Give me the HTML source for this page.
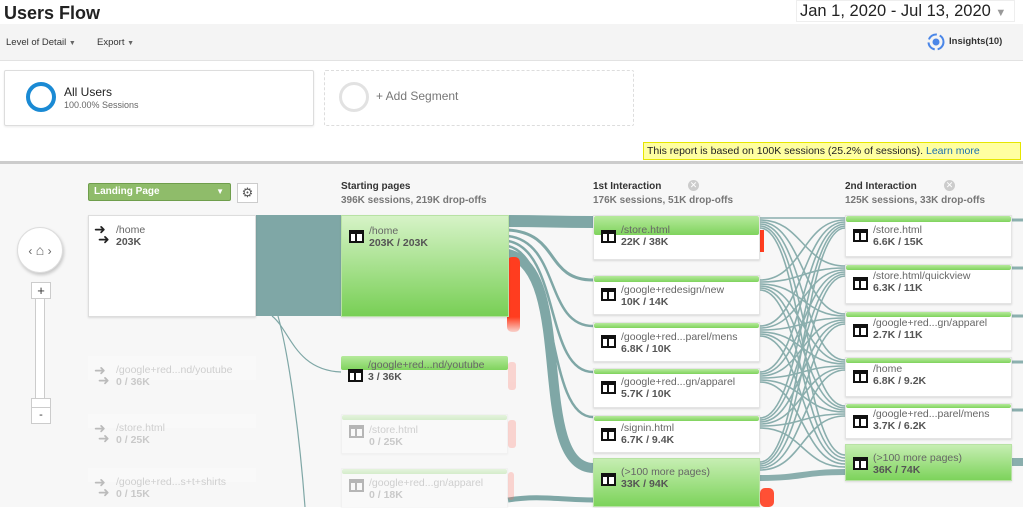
<!DOCTYPE html>
<html><head><meta charset="utf-8"><style>
*{margin:0;padding:0;box-sizing:border-box}
body{width:1023px;height:507px;overflow:hidden;background:#fff;font-family:"Liberation Sans",Arial,sans-serif;position:relative}
.a{position:absolute}
.node{position:absolute;background:#fff;border:1px solid #e4e4e4;box-shadow:0 1px 2px rgba(0,0,0,.12)}
.bar{position:absolute;left:0;right:0;top:0;background:linear-gradient(#b6ea9c,#7fd35d);border-radius:2px}
.ic{position:absolute;left:7px;width:15px;height:13px;background:#111;}
.ic:before{content:"";position:absolute;left:2px;top:4px;width:4px;height:7px;background:#fff}
.ic:after{content:"";position:absolute;left:8px;top:4px;width:5px;height:7px;background:#fff}
.t{position:absolute;left:27px;font-size:10.5px;color:#666;line-height:12px;white-space:nowrap}
.t b{color:#555;font-weight:bold;display:block}
.hd{position:absolute;font-size:10px;color:#333;font-weight:bold;line-height:14px}
.hd span{color:#777;display:block}
.x{position:absolute;width:11px;height:11px;border-radius:50%;background:#ccc;color:#fff;font-size:9px;line-height:11px;text-align:center}
.fade{opacity:.28}
</style></head><body>
<div class="a" style="left:4px;top:3px;font-size:18px;font-weight:bold;color:#222">Users Flow</div>
<div class="a" style="left:796px;top:0;width:219px;height:22px;border:1px solid #eee;font-size:16.5px;color:#222;padding:0 0 0 3px;line-height:20px">Jan 1, 2020 - Jul 13, 2020 <span style="color:#999;font-size:11px">▼</span></div>
<div class="a" style="left:0;top:24px;width:1023px;height:37px;background:#f4f4f4;border-bottom:1px solid #e2e2e2"></div>
<div class="a" style="left:6px;top:37px;font-size:9.5px;color:#333">Level of Detail <span style="font-size:7px;color:#666">▼</span></div>
<div class="a" style="left:97px;top:37px;font-size:9.5px;color:#333">Export <span style="font-size:7px;color:#666">▼</span></div>
<svg class="a" style="left:926px;top:32px" width="20" height="20" viewBox="0 0 20 20"><circle cx="10" cy="10" r="7.5" fill="none" stroke="#4a86e8" stroke-width="2" stroke-dasharray="10 3"/><circle cx="10" cy="10" r="3.5" fill="#4a86e8"/></svg>
<div class="a" style="left:949px;top:36px;font-size:9.5px;color:#333;font-weight:bold">Insights(10)</div>
<div class="a" style="left:4px;top:70px;width:310px;height:56px;border:1px solid #ddd;border-radius:2px;box-shadow:0 1px 2px rgba(0,0,0,.08)"></div>
<div class="a" style="left:26px;top:82px;width:30px;height:30px;border:4px solid #1a8ad4;border-radius:50%"></div>
<div class="a" style="left:64px;top:85px;font-size:12px;color:#222">All Users</div>
<div class="a" style="left:64px;top:100px;font-size:9px;color:#666">100.00% Sessions</div>
<div class="a" style="left:324px;top:70px;width:310px;height:56px;border:1px dashed #ddd;border-radius:2px"></div>
<div class="a" style="left:339px;top:82px;width:30px;height:30px;border:3px solid #e2e2e2;border-radius:50%"></div>
<div class="a" style="left:376px;top:89px;font-size:12px;color:#777">+ Add Segment</div>
<div class="a" style="left:643px;top:142px;width:378px;height:18px;background:#ffffa0;border:1px solid #e6e600;font-size:10.5px;color:#222;line-height:16px;padding-left:3px;white-space:nowrap">This report is based on 100K sessions (25.2% of sessions). <span style="color:#1a6fb0">Learn more</span></div>
<div class="a" style="left:0;top:161px;width:1023px;height:346px;background:#f7f7f7;border-top:3px solid #ccc"></div>

<svg class="a" style="left:0;top:0" width="1023" height="507">
<g fill="none" stroke="#7fa7a6">
<rect x="255" y="215" width="87" height="101" fill="#7fa7a6" stroke="none"/>
<path d="M272,316 C290,330 295,370 341,372" stroke-width="1.2"/>
<path d="M278,316 C290,360 300,440 305,507" stroke-width="1.2"/>
<path d="M508,221 C550,221 550,222 593,222" stroke-width="12"/>
<path d="M508,230 C560,233 545,280 593,280" stroke-width="3"/>
<path d="M508,236 C560,242 545,326 593,326" stroke-width="2.5"/>
<path d="M508,241 C560,250 545,372 593,372" stroke-width="2.5"/>
<path d="M508,246 C560,258 545,417 593,417" stroke-width="2.5"/>
<path d="M508,254 C575,270 530,466 593,468" stroke-width="10"/>
<path d="M508,500 C540,495 560,500 593,500" stroke-width="5"/>
</g>
<g fill="none" stroke="#7fa7a6" stroke-width="1.6" opacity=".9">
<path d="M760,218C802,218 803,218 845,218"/><path d="M760,220C802,220 803,266 845,266"/><path d="M760,222C802,222 803,314 845,314"/><path d="M760,224C802,224 803,360 845,360"/><path d="M760,226C802,226 803,406 845,406"/><path d="M760,228C802,228 803,455 845,455"/>
<path d="M760,280C802,280 803,220 845,220"/><path d="M760,282C802,282 803,268 845,268"/><path d="M760,284C802,284 803,316 845,316"/><path d="M760,286C802,286 803,362 845,362"/><path d="M760,288C802,288 803,408 845,408"/><path d="M760,290C802,290 803,458 845,458"/>
<path d="M760,326C802,326 803,222 845,222"/><path d="M760,328C802,328 803,270 845,270"/><path d="M760,330C802,330 803,318 845,318"/><path d="M760,332C802,332 803,364 845,364"/><path d="M760,334C802,334 803,410 845,410"/><path d="M760,336C802,336 803,461 845,461"/>
<path d="M760,372C802,372 803,224 845,224"/><path d="M760,374C802,374 803,272 845,272"/><path d="M760,376C802,376 803,320 845,320"/><path d="M760,378C802,378 803,366 845,366"/><path d="M760,380C802,380 803,412 845,412"/><path d="M760,382C802,382 803,464 845,464"/>
<path d="M760,418C802,418 803,226 845,226"/><path d="M760,420C802,420 803,274 845,274"/><path d="M760,422C802,422 803,322 845,322"/><path d="M760,424C802,424 803,368 845,368"/><path d="M760,426C802,426 803,414 845,414"/><path d="M760,428C802,428 803,467 845,467"/>
<path d="M760,462C802,462 803,228 845,228"/><path d="M760,464C802,464 803,276 845,276"/><path d="M760,466C802,466 803,324 845,324"/><path d="M760,468C802,468 803,370 845,370"/><path d="M760,470C802,470 803,416 845,416"/>
<path d="M760,478C802,478 803,472 845,472" stroke-width="6"/>
<path d="M1012,220h11M1012,268h11M1012,316h11M1012,362h11M1012,410h11" stroke-width="3"/>
<path d="M1012,462h11" stroke-width="8"/>
</g>
<defs><linearGradient id="rg" x1="0" y1="0" x2="0" y2="1"><stop offset="0" stop-color="#ff3d1f"/><stop offset=".8" stop-color="#ff3d1f"/><stop offset="1" stop-color="#ff3d1f" stop-opacity=".2"/></linearGradient></defs>
<rect x="507" y="257" width="13" height="75" rx="5" fill="url(#rg)"/>
<rect x="760" y="230" width="4" height="22" fill="#ff3d1f"/>
<rect x="760" y="488" width="14" height="19" rx="5" fill="#ff3d1f" opacity=".9"/>
<g opacity=".25"><rect x="508" y="362" width="8" height="28" rx="3" fill="#ff6b5a"/><rect x="508" y="420" width="8" height="28" rx="3" fill="#ff6b5a"/><rect x="508" y="472" width="6" height="28" rx="3" fill="#ff6b5a"/></g>
</svg>

<div class="a" style="left:88px;top:183px;width:143px;height:18px;background:#8fbc6a;border:1px solid #6f9e4c;border-radius:2px;color:#fff;font-size:10px;font-weight:bold;line-height:16px;padding-left:5px">Landing Page<span style="position:absolute;right:6px;font-size:8px">▼</span></div>
<div class="a" style="left:237px;top:183px;width:21px;height:20px;border:1px solid #ccc;background:#fff;color:#555;font-size:13px;text-align:center;line-height:18px">⚙</div>
<div class="hd" style="left:341px;top:180px">Starting pages<span>396K sessions, 219K drop-offs</span></div>
<div class="hd" style="left:593px;top:180px">1st Interaction<span>176K sessions, 51K drop-offs</span></div>
<div class="hd" style="left:845px;top:180px">2nd Interaction<span>125K sessions, 33K drop-offs</span></div>
<div class="x" style="left:688px;top:180px">✕</div><div class="x" style="left:944px;top:180px">✕</div>

<div class="a" style="left:17px;top:227px;width:46px;height:46px;border-radius:50%;background:#fff;border:1px solid #ddd;box-shadow:1px 2px 3px rgba(0,0,0,.2);text-align:center;line-height:44px;color:#666;font-size:12px">‹ <span style="font-size:14px">⌂</span> ›</div>
<div class="a" style="left:35px;top:290px;width:10px;height:132px;background:#fff;border:1px solid #ccc"></div>
<div class="a" style="left:31px;top:282px;width:20px;height:17px;background:#fff;border:1px solid #ccc;font-size:13px;text-align:center;line-height:15px;color:#333">+</div>
<div class="a" style="left:31px;top:398px;width:20px;height:10px;background:#fff;border:1px solid #ccc"></div>
<div class="a" style="left:31px;top:407px;width:20px;height:17px;background:#fff;border:1px solid #ccc;font-size:11px;text-align:center;line-height:15px;color:#333">-</div>

<div class="node" style="left:88px;top:215px;width:168px;height:102px;border-color:#ddd"></div>
<div class="a" style="left:94px;top:224px;font-size:14px;line-height:10px;color:#222">➜<br>&nbsp;➜</div>
<div class="t" style="left:116px;top:224px">/home<b>203K</b></div>
<div class="fade">
<div class="a" style="left:88px;top:356px;width:168px;height:24px;background:#fff"></div>
<div class="a" style="left:94px;top:365px;font-size:14px;line-height:10px;color:#222">➜<br>&nbsp;➜</div><div class="t" style="left:116px;top:364px">/google+red...nd/youtube<b>0 / 36K</b></div>
<div class="a" style="left:88px;top:414px;width:168px;height:14px;background:#fff"></div>
<div class="a" style="left:94px;top:423px;font-size:14px;line-height:10px;color:#222">➜<br>&nbsp;➜</div><div class="t" style="left:116px;top:422px">/store.html<b>0 / 25K</b></div>
<div class="a" style="left:88px;top:468px;width:168px;height:14px;background:#fff"></div>
<div class="a" style="left:94px;top:477px;font-size:14px;line-height:10px;color:#222">➜<br>&nbsp;➜</div><div class="t" style="left:116px;top:476px">/google+red...s+t+shirts<b>0 / 15K</b></div>
<div class="node" style="left:341px;top:414px;width:167px;height:40px"><div class="bar" style="height:5px"></div><div class="ic" style="top:10px"></div><div class="t" style="top:9px">/store.html<b>0 / 25K</b></div></div>
<div class="node" style="left:341px;top:468px;width:167px;height:40px"><div class="bar" style="height:5px"></div><div class="ic" style="top:10px"></div><div class="t" style="top:8px">/google+red...gn/apparel<b>0 / 18K</b></div></div>
</div>
<div class="node" style="left:341px;top:215px;width:168px;height:102px;background:linear-gradient(#d6f3c7,#78cf55);border-color:#b8e2a4"><div class="ic" style="top:14px"></div><div class="t" style="top:9px">/home<b>203K / 203K</b></div></div>
<div class="node" style="left:341px;top:356px;width:167px;height:36px;background:#f7f7f7;box-shadow:none;border:none"><div class="bar" style="height:14px"></div><div class="ic" style="top:13px"></div><div class="t" style="top:3px">/google+red...nd/youtube<b>3 / 36K</b></div></div>

<div class="node" style="left:593px;top:215px;width:167px;height:45px"><div class="bar" style="height:19px"></div><div class="ic" style="top:14px"></div><div class="t" style="top:8px">/store.html<b>22K / 38K</b></div></div>
<div class="node" style="left:593px;top:275px;width:167px;height:40px"><div class="bar" style="height:6px"></div><div class="ic" style="top:12px"></div><div class="t" style="top:8px">/google+redesign/new<b>10K / 14K</b></div></div>
<div class="node" style="left:593px;top:322px;width:167px;height:40px"><div class="bar" style="height:5px"></div><div class="ic" style="top:12px"></div><div class="t" style="top:8px">/google+red...parel/mens<b>6.8K / 10K</b></div></div>
<div class="node" style="left:593px;top:368px;width:167px;height:40px"><div class="bar" style="height:5px"></div><div class="ic" style="top:12px"></div><div class="t" style="top:7px">/google+red...gn/apparel<b>5.7K / 10K</b></div></div>
<div class="node" style="left:593px;top:415px;width:167px;height:38px"><div class="bar" style="height:5px"></div><div class="ic" style="top:12px"></div><div class="t" style="top:6px">/signin.html<b>6.7K / 9.4K</b></div></div>
<div class="node" style="left:593px;top:458px;width:167px;height:49px;background:linear-gradient(#c6eeb2,#7dd35b);border-color:#b8e2a4"><div class="ic" style="top:14px"></div><div class="t" style="top:7px">(&gt;100 more pages)<b>33K / 94K</b></div></div>

<div class="node" style="left:845px;top:215px;width:167px;height:42px"><div class="bar" style="height:6px"></div><div class="ic" style="top:13px"></div><div class="t" style="top:8px">/store.html<b>6.6K / 15K</b></div></div>
<div class="node" style="left:845px;top:264px;width:167px;height:40px"><div class="bar" style="height:5px"></div><div class="ic" style="top:12px"></div><div class="t" style="top:5px">/store.html/quickview<b>6.3K / 11K</b></div></div>
<div class="node" style="left:845px;top:311px;width:167px;height:40px"><div class="bar" style="height:5px"></div><div class="ic" style="top:12px"></div><div class="t" style="top:5px">/google+red...gn/apparel<b>2.7K / 11K</b></div></div>
<div class="node" style="left:845px;top:357px;width:167px;height:40px"><div class="bar" style="height:5px"></div><div class="ic" style="top:12px"></div><div class="t" style="top:5px">/home<b>6.8K / 9.2K</b></div></div>
<div class="node" style="left:845px;top:403px;width:167px;height:36px"><div class="bar" style="height:4px"></div><div class="ic" style="top:11px"></div><div class="t" style="top:4px">/google+red...parel/mens<b>3.7K / 6.2K</b></div></div>
<div class="node" style="left:845px;top:444px;width:167px;height:37px;background:linear-gradient(#c6eeb2,#7dd35b);border-color:#b8e2a4"><div class="ic" style="top:12px"></div><div class="t" style="top:7px">(&gt;100 more pages)<b>36K / 74K</b></div></div>
</body></html>
